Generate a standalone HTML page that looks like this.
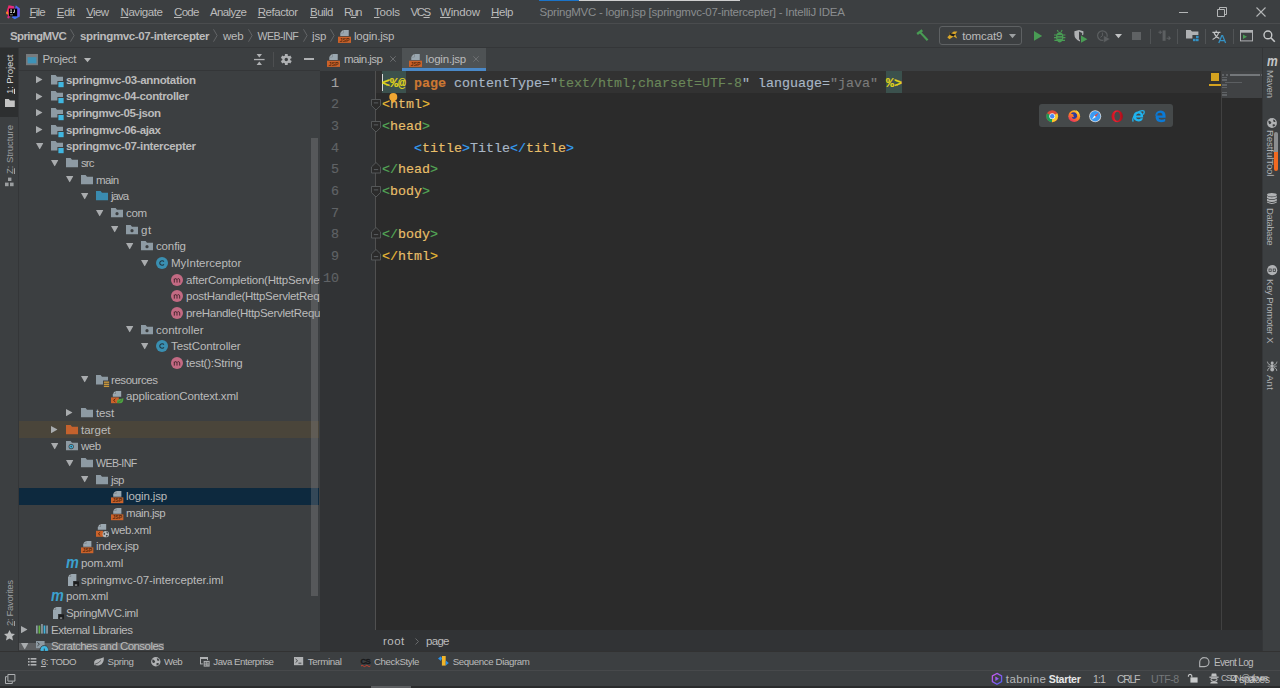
<!DOCTYPE html>
<html>
<head>
<meta charset="utf-8">
<title>SpringMVC - login.jsp</title>
<style>
*{box-sizing:border-box;margin:0;padding:0}
html,body{width:1280px;height:688px;overflow:hidden;background:#3c3f41}
body{position:relative;font-family:"Liberation Sans",sans-serif;font-size:11.5px;color:#bbbbbb}
.abs{position:absolute}
.t{position:absolute;white-space:nowrap;line-height:16px;height:16px}
.b{font-weight:bold}
svg{position:absolute;overflow:visible}
u{text-decoration:underline;text-underline-offset:1px}
#menubar{left:0;top:0;width:1280px;height:23px;background:#3c3f41}
#navbar{left:0;top:23px;width:1280px;height:24px;background:#3c3f41;border-top:1px solid #4a4c4e}
#leftstrip{left:0;top:47px;width:18px;height:604px;background:#3c3f41;border-top:1px solid #343638}
#rightstrip{left:1262px;top:47px;width:18px;height:604px;background:#3c3f41;border-top:1px solid #343638;border-left:1px solid #343638}
#project{left:18px;top:47px;width:302px;height:604px;background:#3c3f41;border-top:1px solid #343638;border-left:1px solid #343638;overflow:hidden}
#tabs{left:320px;top:47px;width:942px;height:24px;background:#3c3f41;border-top:1px solid #343638}
#editor{left:320px;top:71px;width:942px;height:559px;background:#2b2b2b;overflow:hidden}
#gutter{left:0;top:0;width:56px;height:559px;background:#313335;border-right:1px solid #505050}
#crumbs{left:320px;top:630px;width:942px;height:21px;background:#313335}
#bottomstrip{left:0;top:651px;width:1280px;height:19px;background:#3c3f41;border-top:1px solid #323232}
#statusbar{left:0;top:669.5px;width:1280px;height:18.5px;background:#3c3f41;border-top:1px solid #47494b}
.row{position:absolute;left:0;width:300.3px;height:16.667px}
.code{font-family:"Liberation Mono",monospace;font-size:13.333px;-webkit-text-stroke:0.15px;line-height:21.667px;height:21.667px;white-space:pre;position:absolute}
.ln{font-family:"Liberation Mono",monospace;font-size:13.333px;-webkit-text-stroke:0.15px;line-height:21.667px;height:21.667px;position:absolute;color:#606366}
.vt{position:absolute;white-space:nowrap;transform-origin:0 0;font-size:11px;line-height:14px;height:14px}
</style>
</head>
<body>

<svg width="0" height="0" style="position:absolute">
<defs>
<symbol id="i-folder" viewBox="0 0 12 9.6"><path d="M0 0H4.6L6 1.7H12V9.6H0z" fill="#8d9aa3"/></symbol>
<symbol id="i-folder-o" viewBox="0 0 12 9.6"><path d="M0 0H4.6L6 1.7H12V9.6H0z" fill="#c4622d"/></symbol>
<symbol id="i-folder-b" viewBox="0 0 12 9.6"><path d="M0 0H4.6L6 1.7H12V9.6H0z" fill="#3a8bb0"/></symbol>
<symbol id="i-module" viewBox="0 0 12.8 12.4"><path d="M0 0H4.6L6 1.7H12V6H6.4V9.6H0z" fill="#8d9aa3"/><rect x="7.4" y="7" width="5.4" height="5.4" fill="#40b6e0"/></symbol>
<symbol id="i-pkg" viewBox="0 0 12 9.6"><path d="M0 0H4.6L6 1.7H12V9.6H0z" fill="#8d9aa3"/><circle cx="6" cy="5.7" r="1.6" fill="#3c3f41"/></symbol>
<symbol id="i-webf" viewBox="0 0 12 9.6"><path d="M0 0H4.6L6 1.7H12V9.6H0z" fill="#8d9aa3"/><circle cx="5.2" cy="5.6" r="2.6" fill="#3c3f41"/><circle cx="5.2" cy="5.6" r="1.9" fill="#40b6e0"/><circle cx="5.2" cy="5.6" r="0.8" fill="#3c3f41"/></symbol>
<symbol id="i-res" viewBox="0 0 13.4 12.4"><path d="M0 0H4.6L6 1.7H12V5.6H7V9.6H0z" fill="#8d9aa3"/><rect x="7.9" y="6.5" width="5.4" height="1.4" fill="#c9973a"/><rect x="7.9" y="8.6" width="5.4" height="1.4" fill="#c9973a"/><rect x="7.9" y="10.7" width="5.4" height="1.4" fill="#c9973a"/></symbol>
<symbol id="i-class" viewBox="0 0 12 12"><circle cx="6" cy="6" r="6" fill="#3a8fb1"/><path d="M7.9 7.4A2.3 2.3 0 1 1 7.9 4.6" fill="none" stroke="#213640" stroke-width="1.1"/></symbol>
<symbol id="i-method" viewBox="0 0 12 12"><circle cx="6" cy="6" r="6" fill="#c36a83"/><path d="M3.3 8.6V4.6M3.3 5.6Q4 4.4 5 4.7T6 6V8.6M6 5.6Q6.7 4.4 7.7 4.7T8.7 6V8.6" fill="none" stroke="#4a2731" stroke-width="1"/></symbol>
<symbol id="i-page" viewBox="0 0 8.4 5.8"><path d="M3 0H8.4V5.8H0V3z" fill="#9aa7b0"/><path d="M2.4 0.3V2.5H0.2z" fill="#9aa7b0" opacity=".55"/></symbol>
<symbol id="i-jsp" viewBox="0 0 12.6 12.4"><path d="M5.3 0H10.4V5.8H2.2V3.1z" fill="#9aa7b0"/><path d="M4.7 0V2.5H2.2z" fill="#b9c3c9" opacity=".75"/><path d="M4.7 2.5H2.2V3.1H5.3V0H4.7z" fill="#3c3f41" opacity=".45"/><rect x="0" y="6.4" width="12.6" height="6" fill="#cb622a"/><text x="6.3" y="11.3" font-family="Liberation Sans" font-weight="bold" font-size="5.4" text-anchor="middle" fill="#5a2a0c" textLength="9.6" lengthAdjust="spacingAndGlyphs">JSP</text></symbol>
<symbol id="i-xmls" viewBox="0 0 12.6 12.4"><path d="M4.9 0H10.2V5.8H1.8V3.1z" fill="#9aa7b0"/><path d="M4.3 0V2.5H1.8z" fill="#b9c3c9" opacity=".75"/><path d="M4.3 2.5H1.8V3.1H4.9V0H4.3z" fill="#3c3f41" opacity=".45"/><rect x="0" y="6.4" width="7.8" height="6" fill="#cb622a"/><path d="M4.4 7.8L2.6 9.4L4.4 11" fill="none" stroke="#5a2a0c" stroke-width="1"/><path d="M6 11.8Q5.6 8.6 8.6 8Q10.8 7.8 12.6 7Q12.8 12 9 12.4Q7.2 12.6 6 11.8z" fill="#4fa043"/><path d="M6.6 11.6Q9 11 11 8.6" stroke="#2f6e2a" stroke-width="0.6" fill="none"/></symbol>
<symbol id="i-xmlw" viewBox="0 0 13 13.4"><path d="M4.9 0H10.2V5.8H1.8V3.1z" fill="#9aa7b0"/><path d="M4.3 0V2.5H1.8z" fill="#b9c3c9" opacity=".75"/><path d="M4.3 2.5H1.8V3.1H4.9V0H4.3z" fill="#3c3f41" opacity=".45"/><rect x="0" y="6.8" width="7" height="6" fill="#cb622a"/><path d="M4.2 8.2L2.4 9.8L4.2 11.4" fill="none" stroke="#5a2a0c" stroke-width="1"/><circle cx="9.8" cy="10.2" r="3.2" fill="#b4b8bb"/><path d="M7.6 8.6Q9 9 9.2 10Q8.8 11 7.8 11zM10.4 7.6Q11.8 8 12.2 9.2Q11.4 9.8 10.6 9zM10 11Q11.4 10.6 12 11.6Q11.2 12.8 10.2 12.8z" fill="#3c3f41"/></symbol>
<symbol id="i-iml" viewBox="0 0 11.2 12.6"><path d="M3.1 0H8.4V7H5V12H0V3.1z" fill="#9aa7b0"/><path d="M2.5 0V2.5H0z" fill="#b9c3c9" opacity=".75"/><path d="M2.5 2.5H0V3.1H3.1V0H2.5z" fill="#3c3f41" opacity=".45"/><rect x="5.8" y="7.4" width="5.4" height="5.2" fill="#1c1d1e"/><rect x="6.8" y="10.6" width="2.4" height="0.9" fill="#d6d9da"/></symbol>
<symbol id="i-lib" viewBox="0 0 12 9.8"><rect x="0" y="1.5" width="1.7" height="8.3" fill="#8d9aa3"/><rect x="2.55" y="1.5" width="1.7" height="8.3" fill="#62b543"/><rect x="5.1" y="0" width="1.7" height="9.8" fill="#8d9aa3"/><rect x="7.65" y="1.5" width="1.7" height="8.3" fill="#40b6e0"/><rect x="10.2" y="1.5" width="1.7" height="8.3" fill="#8d9aa3"/></symbol>
<symbol id="i-scr" viewBox="0 0 12.6 10.4"><rect x="0" y="0" width="8.6" height="7.2" fill="#8d9aa3"/><path d="M1.4 1.4L3.4 3.2L1.4 5" stroke="#3c3f41" stroke-width="0.9" fill="none"/><path d="M4.31 10.4A4.3 4.3 0 1 1 12.29 10.4z" fill="#40b6e0" stroke="#3c3f41" stroke-width="0.9"/><path d="M8.3 10.4V7.6" stroke="#3c3f41" stroke-width="1"/></symbol>
<symbol id="i-arrow-r" viewBox="0 0 6.6 7.2"><path d="M0 0L6.6 3.6L0 7.2z" fill="#a9acae"/></symbol>
<symbol id="i-arrow-d" viewBox="0 0 7.4 6.4"><path d="M0 0H7.4L3.7 6.4z" fill="#a9acae"/></symbol>
</defs>
</svg>

<div id="menubar" class="abs"><svg style="left:5.50px;top:4.50px" width="14.2" height="14.4" viewBox="0 0 14.2 14.4">
<defs><linearGradient id="lgA" x1="0" y1="0" x2="1" y2="1"><stop offset="0" stop-color="#fe2857"/><stop offset="1" stop-color="#c22fb5"/></linearGradient>
<linearGradient id="lgB" x1="0" y1="0" x2="0" y2="1"><stop offset="0" stop-color="#3b6ff5"/><stop offset=".5" stop-color="#7a48e8"/><stop offset="1" stop-color="#2f7cf6"/></linearGradient></defs>
<path d="M2.6 0.2L8 1.2L8.5 4L3 13.6L1.2 13L2.2 9.6L0.2 8.6L0.6 6.4z" fill="url(#lgA)"/>
<path d="M0 7.2L1.8 6.2L2.6 9.4L0.6 9.2z" fill="#fd8a1f"/>
<path d="M9.8 0.3L13.9 3.4L13.8 11.6L8.8 14.2L6 12.6L9 4z" fill="url(#lgB)"/>
<rect x="2.9" y="3.6" width="8.3" height="7.7" fill="#000"/>
<path d="M4.2 4.6h1.8v0.7h-0.5v2h0.5v0.7h-1.8v-0.7h0.5v-2h-0.5zM7.9 4.6h0.9v2.5q0 0.9-1 0.9q-0.7 0-1.1-0.5l0.5-0.5q0.2 0.3 0.5 0.3q0.2 0 0.2-0.3z" fill="#e8e8e8"/>
<rect x="4" y="9.6" width="3" height="0.6" fill="#d0d0d0"/></svg>
<span class="t" style="letter-spacing:-0.766px;left:29.5px;top:4.00px;color:#bbbbbb"><u>F</u>ile</span>
<span class="t" style="letter-spacing:-0.526px;left:56.75px;top:4.00px;color:#bbbbbb"><u>E</u>dit</span>
<span class="t" style="letter-spacing:-0.661px;left:86.25px;top:4.00px;color:#bbbbbb"><u>V</u>iew</span>
<span class="t" style="letter-spacing:-0.415px;left:120.5px;top:4.00px;color:#bbbbbb"><u>N</u>avigate</span>
<span class="t" style="letter-spacing:-0.667px;left:174px;top:4.00px;color:#bbbbbb"><u>C</u>ode</span>
<span class="t" style="letter-spacing:-0.656px;left:210px;top:4.00px;color:#bbbbbb">Analy<u>z</u>e</span>
<span class="t" style="letter-spacing:-0.462px;left:257.75px;top:4.00px;color:#bbbbbb"><u>R</u>efactor</span>
<span class="t" style="letter-spacing:-0.520px;left:310px;top:4.00px;color:#bbbbbb"><u>B</u>uild</span>
<span class="t" style="letter-spacing:-1.312px;left:344px;top:4.00px;color:#bbbbbb">R<u>u</u>n</span>
<span class="t" style="letter-spacing:-0.215px;left:374px;top:4.00px;color:#bbbbbb"><u>T</u>ools</span>
<span class="t" style="letter-spacing:-1.500px;left:410.5px;top:4.00px;color:#bbbbbb">VC<u>S</u></span>
<span class="t" style="letter-spacing:-0.184px;left:440px;top:4.00px;color:#bbbbbb"><u>W</u>indow</span>
<span class="t" style="letter-spacing:-0.391px;left:491px;top:4.00px;color:#bbbbbb"><u>H</u>elp</span>
<span class="t" style="letter-spacing:-0.244px;left:539.5px;top:4.00px;color:#8a8d8f">SpringMVC - login.jsp [springmvc-07-intercepter] - IntelliJ IDEA</span>
<div class="abs" style="left:539.4px;top:0;width:200.6px;height:1.2px;background:#cfcfcf"></div><div class="abs" style="left:539.4px;top:0;width:39.8px;height:1.2px;background:#1a73c8"></div>
<div class="abs" style="left:1178.5px;top:12px;width:9px;height:1px;background:#b4b6b7"></div>
<svg style="left:1217.00px;top:7.00px" width="10" height="10" viewBox="0 0 10 10"><path d="M0.5 2.5h7v7h-7zM2.5 2.5v-2h7v7h-2" fill="none" stroke="#b4b6b7" stroke-width="1"/></svg>
<svg style="left:1255.50px;top:7.00px" width="10" height="10" viewBox="0 0 10 10"><path d="M0.5 0.5l9 9M9.5 0.5l-9 9" fill="none" stroke="#b4b6b7" stroke-width="1.1"/></svg></div>
<div id="navbar" class="abs"><span class="t b" style="letter-spacing:-0.654px;left:10px;top:4.00px;">SpringMVC</span>
<svg style="left:70.30px;top:5.40px" width="4.6" height="13" viewBox="0 0 4.6 13"><path d="M0.5 0.3L4.1 6.5L0.5 12.7" fill="none" stroke="#65686a" stroke-width="0.9"/></svg>
<span class="t b" style="letter-spacing:-0.372px;left:80px;top:4.00px;">springmvc-07-intercepter</span>
<svg style="left:213.30px;top:5.40px" width="4.6" height="13" viewBox="0 0 4.6 13"><path d="M0.5 0.3L4.1 6.5L0.5 12.7" fill="none" stroke="#65686a" stroke-width="0.9"/></svg>
<span class="t" style="letter-spacing:-0.180px;left:223px;top:4.00px;">web</span>
<svg style="left:247.80px;top:5.40px" width="4.6" height="13" viewBox="0 0 4.6 13"><path d="M0.5 0.3L4.1 6.5L0.5 12.7" fill="none" stroke="#65686a" stroke-width="0.9"/></svg>
<span class="t" style="letter-spacing:-0.581px;left:257.5px;top:4.00px;font-size:10.6px">WEB-INF</span>
<svg style="left:302.80px;top:5.40px" width="4.6" height="13" viewBox="0 0 4.6 13"><path d="M0.5 0.3L4.1 6.5L0.5 12.7" fill="none" stroke="#65686a" stroke-width="0.9"/></svg>
<span class="t" style="letter-spacing:-0.102px;left:312px;top:4.00px;">jsp</span>
<svg style="left:329.80px;top:5.40px" width="4.6" height="13" viewBox="0 0 4.6 13"><path d="M0.5 0.3L4.1 6.5L0.5 12.7" fill="none" stroke="#65686a" stroke-width="0.9"/></svg>
<svg style="left:338.00px;top:5.50px" width="13" height="13" ><use href="#i-jsp"/></svg>
<span class="t" style="letter-spacing:-0.213px;left:354px;top:4.00px;">login.jsp</span>
<svg style="left:916.40px;top:5.40px" width="13" height="12.2" viewBox="0 0 14 13.6"><path d="M0.2 4.6L6 0.2L7.6 2.4L5.9 3.7L13.6 11.6L11.8 13.4L4.1 5.1L1.8 6.8z" fill="#499c54"/></svg>
<div class="abs" style="left:939px;top:2.1999999999999993px;width:83.2px;height:18.4px;border:1px solid #5e6163;border-radius:3px"></div>
<svg style="left:946.50px;top:7.00px" width="11" height="9" viewBox="0 0 11 9"><path d="M0.3 6.2L3 3.6L1.8 1.2L4.2 2.6L6.8 0.4L10.4 0.6L8.2 3.2L10.2 7.4L6.6 5.6L2.4 8.2z" fill="#d8a62a"/><path d="M1.8 1.2L4.4 2.4L7 3L8.2 3.2L6.6 5.6L3.6 4.6z" fill="#1d1d1b"/></svg>
<span class="t" style="letter-spacing:-0.137px;left:962.3px;top:3.70px;">tomcat9</span>
<svg style="left:1008.70px;top:10.00px" width="7" height="4.2" viewBox="0 0 7 4.2"><path d="M0 0H7L3.5 4.2z" fill="#9da0a2"/></svg>
<svg style="left:1033.60px;top:7.20px" width="8.2" height="9.8" viewBox="0 0 9 10.6"><path d="M0 0L9 5.3L0 10.6z" fill="#499c54"/></svg>
<svg style="left:1053.50px;top:5.60px" width="11.4" height="12.6" viewBox="0 0 11.4 12.6"><path d="M3.2 0.2L4.4 1.8M8.2 0.2L7 1.8" stroke="#499c54" stroke-width="1.1" fill="none"/>
<ellipse cx="5.7" cy="7.2" rx="3.7" ry="5.2" fill="#499c54"/>
<path d="M0 5h11.4M0 7.6h11.4M0.4 10.4h10.6" stroke="#499c54" stroke-width="1.2"/>
<path d="M3.4 5.6h4.6M3.4 8.2h4.6" stroke="#3c3f41" stroke-width="0.9"/></svg>
<svg style="left:1074.00px;top:5.60px" width="14" height="13" viewBox="0 0 14 13"><path d="M0.4 1.2L5 0L9.4 1.2V4.6L6 6.4V11.4Q0.4 9.4 0.4 4.6z" fill="#afb1b3"/>
<path d="M5 1.6V10Q8.4 8.2 8.2 3z" fill="#3c3f41"/>
<path d="M7 5.6L13.4 9.2L7 12.8z" fill="#499c54"/></svg>
<svg style="left:1097.00px;top:5.60px" width="13.4" height="13" viewBox="0 0 13.4 13"><circle cx="5.4" cy="5.6" r="4.8" fill="none" stroke="#5c5f61" stroke-width="1.2"/>
<path d="M5.4 2.6V5.8L3.4 7.4" fill="none" stroke="#5c5f61" stroke-width="1"/>
<path d="M6.6 5.4L13.2 9L6.6 12.8z" fill="#5c5f61" stroke="#3c3f41" stroke-width="0.6"/></svg>
<svg style="left:1115.00px;top:10.20px" width="7" height="4.2" viewBox="0 0 7 4.2"><path d="M0 0H7L3.5 4.2z" fill="#c0c2c3"/></svg>
<div class="abs" style="left:1132.2px;top:7.800000000000001px;width:8.6px;height:8.6px;background:#5f6264"></div>
<div class="abs" style="left:1150px;top:4.5px;width:1px;height:15px;background:#515456"></div>
<svg style="left:1157.50px;top:6.00px" width="12.5" height="11" viewBox="0 0 12.5 11"><path d="M2.2 0.4V4M0.4 2.2H4" stroke="#5c5f61" stroke-width="1.1"/><rect x="4.6" y="0.4" width="3" height="10.4" fill="#5c5f61"/><path d="M8.6 8.2H12M10.6 6.4L12.2 8.2L10.6 10" stroke="#5c5f61" stroke-width="1.1" fill="none"/></svg>
<div class="abs" style="left:1177px;top:4.5px;width:1px;height:15px;background:#515456"></div>
<svg style="left:1185.50px;top:6.40px" width="13" height="11.4" viewBox="0 0 13 11.4"><path d="M0 0H4.6L6 1.6H12.4V5H6.4V8.6H0z" fill="#afb1b3"/>
<rect x="10" y="5.8" width="2.6" height="2.4" fill="#3592c4"/><rect x="7" y="8.8" width="2.6" height="2.4" fill="#3592c4"/><rect x="10" y="8.8" width="2.6" height="2.4" fill="#3592c4"/></svg>
<div class="abs" style="left:1205px;top:4.5px;width:1px;height:15px;background:#515456"></div>
<svg style="left:1212.00px;top:5.60px" width="14" height="13.4" viewBox="0 0 14 13.4"><path d="M0.4 2.4H8.4M4.2 0.4V2.4M6.6 2.6Q5.4 7 0.6 9.4M2 2.8Q3.6 7 7.4 8.6" fill="none" stroke="#c3c5c6" stroke-width="1.1"/>
<path d="M6.8 13L9.8 5.6H10.6L13.6 13M7.8 10.6H12.6" fill="none" stroke="#3592c4" stroke-width="1.3"/></svg>
<div class="abs" style="left:1233px;top:4.5px;width:1px;height:15px;background:#515456"></div>
<svg style="left:1240.00px;top:6.40px" width="13" height="11.4" viewBox="0 0 13 11.4"><rect x="0.5" y="0.5" width="12" height="10.4" fill="none" stroke="#afb1b3" stroke-width="1"/><rect x="0.5" y="0.5" width="12" height="2.2" fill="#afb1b3"/>
<path d="M3 4.6L7 6.8L3 9z" fill="#499c54"/></svg>
<svg style="left:1262.60px;top:6.20px" width="12.4" height="12.4" viewBox="0 0 12.4 12.4"><circle cx="4.9" cy="4.9" r="3.9" fill="none" stroke="#c6c8c9" stroke-width="1.4"/><path d="M7.8 7.8L11.8 11.8" stroke="#c6c8c9" stroke-width="1.6"/></svg></div>
<div id="leftstrip" class="abs"><div class="abs" style="left:0;top:0px;width:18px;height:68.5px;background:#2d2f30"></div>
<span class="vt" style="letter-spacing:-0.116px;left:3.00px;top:45.50px;transform:rotate(-90deg);font-size:9.6px;color:#d4d4d4;"><u>1</u>: Project</span>
<svg style="left:4.80px;top:50.80px" width="9.8" height="8" viewBox="0 0 9.8 8"><path d="M0 0H3.8L5 1.4H9.8V8H0z" fill="#c4c4c4"/></svg>
<span class="vt" style="letter-spacing:-0.104px;left:3.00px;top:126.40px;transform:rotate(-90deg);font-size:9.6px;color:#9b9ea0;"><u>Z</u>: Structure</span>
<svg style="left:5.00px;top:128.60px" width="9" height="10" viewBox="0 0 9 10"><rect x="3" y="0.6" width="3.4" height="3.4" fill="#9b9ea0"/><rect x="0" y="5.6" width="3.6" height="3.6" fill="#9b9ea0"/><rect x="5" y="5.6" width="3.6" height="3.6" fill="#9b9ea0"/></svg>
<span class="vt" style="letter-spacing:-0.376px;left:3.00px;top:578.40px;transform:rotate(-90deg);font-size:9.6px;color:#9b9ea0;"><u>2</u>: Favorites</span>
<svg style="left:4.00px;top:582.20px" width="11" height="10.4" viewBox="0 0 11 10.4"><path d="M5.5 0L7.2 3.6L11 4L8.2 6.6L9 10.4L5.5 8.4L2 10.4L2.8 6.6L0 4L3.8 3.6z" fill="#b9bbbc"/></svg></div>
<div id="project" class="abs">
<div class="abs" style="left:0px;top:595px;width:145px;height:6.5px;background:#6b6d6f;opacity:.7"></div>
<svg style="left:16.70px;top:27.93px" width="6.6" height="7.2" ><use href="#i-arrow-r"/></svg>
<svg style="left:31.60px;top:26.73px" width="12.8" height="12.4" ><use href="#i-module"/></svg>
<span class="t b" style="letter-spacing:-0.336px;left:47px;top:23.53px;">springmvc-03-annotation</span>
<svg style="left:16.70px;top:44.60px" width="6.6" height="7.2" ><use href="#i-arrow-r"/></svg>
<svg style="left:31.60px;top:43.40px" width="12.8" height="12.4" ><use href="#i-module"/></svg>
<span class="t b" style="letter-spacing:-0.393px;left:47px;top:40.20px;">springmvc-04-controller</span>
<svg style="left:16.70px;top:61.27px" width="6.6" height="7.2" ><use href="#i-arrow-r"/></svg>
<svg style="left:31.60px;top:60.07px" width="12.8" height="12.4" ><use href="#i-module"/></svg>
<span class="t b" style="letter-spacing:-0.453px;left:47px;top:56.87px;">springmvc-05-json</span>
<svg style="left:16.70px;top:77.93px" width="6.6" height="7.2" ><use href="#i-arrow-r"/></svg>
<svg style="left:31.60px;top:76.73px" width="12.8" height="12.4" ><use href="#i-module"/></svg>
<span class="t b" style="letter-spacing:-0.375px;left:47px;top:73.53px;">springmvc-06-ajax</span>
<svg style="left:16.50px;top:94.90px" width="7.4" height="6.4" ><use href="#i-arrow-d"/></svg>
<svg style="left:31.60px;top:93.40px" width="12.8" height="12.4" ><use href="#i-module"/></svg>
<span class="t b" style="letter-spacing:-0.350px;left:47px;top:90.20px;">springmvc-07-intercepter</span>
<svg style="left:31.50px;top:111.57px" width="7.4" height="6.4" ><use href="#i-arrow-d"/></svg>
<svg style="left:46.80px;top:110.07px" width="12" height="9.6" ><use href="#i-folder"/></svg>
<span class="t" style="letter-spacing:-0.922px;left:62px;top:106.87px;">src</span>
<svg style="left:46.50px;top:128.24px" width="7.4" height="6.4" ><use href="#i-arrow-d"/></svg>
<svg style="left:61.80px;top:126.74px" width="12" height="9.6" ><use href="#i-folder"/></svg>
<span class="t" style="letter-spacing:-0.579px;left:77px;top:123.54px;">main</span>
<svg style="left:61.50px;top:144.90px" width="7.4" height="6.4" ><use href="#i-arrow-d"/></svg>
<svg style="left:76.80px;top:143.40px" width="12" height="9.6" ><use href="#i-folder-b"/></svg>
<span class="t" style="letter-spacing:-1.003px;left:92px;top:140.20px;">java</span>
<svg style="left:76.50px;top:161.57px" width="7.4" height="6.4" ><use href="#i-arrow-d"/></svg>
<svg style="left:91.80px;top:160.07px" width="12" height="9.6" ><use href="#i-pkg"/></svg>
<span class="t" style="letter-spacing:-0.317px;left:107px;top:156.87px;">com</span>
<svg style="left:91.50px;top:178.24px" width="7.4" height="6.4" ><use href="#i-arrow-d"/></svg>
<svg style="left:106.80px;top:176.74px" width="12" height="9.6" ><use href="#i-pkg"/></svg>
<span class="t" style="letter-spacing:0.606px;left:122px;top:173.54px;">gt</span>
<svg style="left:106.50px;top:194.90px" width="7.4" height="6.4" ><use href="#i-arrow-d"/></svg>
<svg style="left:121.80px;top:193.40px" width="12" height="9.6" ><use href="#i-pkg"/></svg>
<span class="t" style="letter-spacing:-0.138px;left:137px;top:190.20px;">config</span>
<svg style="left:121.50px;top:211.57px" width="7.4" height="6.4" ><use href="#i-arrow-d"/></svg>
<svg style="left:137.00px;top:208.87px" width="12" height="12" ><use href="#i-class"/></svg>
<span class="t" style="letter-spacing:-0.001px;left:152px;top:206.87px;">MyInterceptor</span>
<svg style="left:152.00px;top:225.54px" width="12" height="12" ><use href="#i-method"/></svg>
<span class="t" style="letter-spacing:-0.204px;left:167px;top:223.54px;">afterCompletion(HttpServlet</span>
<svg style="left:152.00px;top:242.20px" width="12" height="12" ><use href="#i-method"/></svg>
<span class="t" style="letter-spacing:-0.267px;left:167px;top:240.20px;">postHandle(HttpServletReq</span>
<svg style="left:152.00px;top:258.87px" width="12" height="12" ><use href="#i-method"/></svg>
<span class="t" style="letter-spacing:-0.287px;left:167px;top:256.87px;">preHandle(HttpServletRequ</span>
<svg style="left:106.50px;top:278.24px" width="7.4" height="6.4" ><use href="#i-arrow-d"/></svg>
<svg style="left:121.80px;top:276.74px" width="12" height="9.6" ><use href="#i-pkg"/></svg>
<span class="t" style="letter-spacing:0.021px;left:137px;top:273.54px;">controller</span>
<svg style="left:121.50px;top:294.91px" width="7.4" height="6.4" ><use href="#i-arrow-d"/></svg>
<svg style="left:137.00px;top:292.21px" width="12" height="12" ><use href="#i-class"/></svg>
<span class="t" style="letter-spacing:-0.096px;left:152px;top:290.21px;">TestController</span>
<svg style="left:152.00px;top:308.87px" width="12" height="12" ><use href="#i-method"/></svg>
<span class="t" style="letter-spacing:-0.228px;left:167px;top:306.87px;">test():String</span>
<svg style="left:61.50px;top:328.24px" width="7.4" height="6.4" ><use href="#i-arrow-d"/></svg>
<svg style="left:76.80px;top:326.74px" width="13.4" height="12.4" ><use href="#i-res"/></svg>
<span class="t" style="letter-spacing:-0.450px;left:92px;top:323.54px;">resources</span>
<svg style="left:91.80px;top:342.91px" width="12.6" height="12.4" ><use href="#i-xmls"/></svg>
<span class="t" style="letter-spacing:-0.157px;left:107px;top:340.21px;">applicationContext.xml</span>
<svg style="left:46.70px;top:361.27px" width="6.6" height="7.2" ><use href="#i-arrow-r"/></svg>
<svg style="left:61.80px;top:360.07px" width="12" height="9.6" ><use href="#i-folder"/></svg>
<span class="t" style="letter-spacing:-0.116px;left:77px;top:356.87px;">test</span>
<div class="row" style="top:373.21px;background:#4a453a"></div>
<svg style="left:31.70px;top:377.94px" width="6.6" height="7.2" ><use href="#i-arrow-r"/></svg>
<svg style="left:46.80px;top:376.74px" width="12" height="9.6" ><use href="#i-folder-o"/></svg>
<span class="t" style="letter-spacing:0.016px;left:62px;top:373.54px;">target</span>
<svg style="left:31.50px;top:394.91px" width="7.4" height="6.4" ><use href="#i-arrow-d"/></svg>
<svg style="left:46.80px;top:393.41px" width="12" height="9.6" ><use href="#i-webf"/></svg>
<span class="t" style="letter-spacing:-0.455px;left:62px;top:390.21px;">web</span>
<svg style="left:46.50px;top:411.57px" width="7.4" height="6.4" ><use href="#i-arrow-d"/></svg>
<svg style="left:61.80px;top:410.07px" width="12" height="9.6" ><use href="#i-folder"/></svg>
<span class="t" style="letter-spacing:-0.589px;left:77px;top:406.87px;font-size:10.6px">WEB-INF</span>
<svg style="left:61.50px;top:428.24px" width="7.4" height="6.4" ><use href="#i-arrow-d"/></svg>
<svg style="left:76.80px;top:426.74px" width="12" height="9.6" ><use href="#i-folder"/></svg>
<span class="t" style="letter-spacing:-0.652px;left:92px;top:423.54px;">jsp</span>
<div class="row" style="top:439.88px;background:#0d293e"></div>
<svg style="left:91.80px;top:442.91px" width="12.6" height="12.4" ><use href="#i-jsp"/></svg>
<span class="t" style="letter-spacing:-0.125px;left:107px;top:440.21px;">login.jsp</span>
<svg style="left:91.80px;top:459.58px" width="12.6" height="12.4" ><use href="#i-jsp"/></svg>
<span class="t" style="letter-spacing:-0.447px;left:107px;top:456.88px;">main.jsp</span>
<svg style="left:77.00px;top:476.24px" width="13" height="13.4" ><use href="#i-xmlw"/></svg>
<span class="t" style="letter-spacing:-0.331px;left:92px;top:473.54px;">web.xml</span>
<svg style="left:61.80px;top:492.91px" width="12.6" height="12.4" ><use href="#i-jsp"/></svg>
<span class="t" style="letter-spacing:-0.299px;left:77px;top:490.21px;">index.jsp</span>
<span class="t b" style="left:46.60px;top:505.68px;font-style:italic;font-size:16px;line-height:18px;height:18px;color:#3ba1cf;transform:scaleX(0.9);transform-origin:0 0">m</span>
<span class="t" style="letter-spacing:-0.192px;left:62px;top:506.88px;">pom.xml</span>
<svg style="left:48.80px;top:526.14px" width="11.2" height="12.6" ><use href="#i-iml"/></svg>
<span class="t" style="letter-spacing:-0.079px;left:62px;top:523.54px;">springmvc-07-intercepter.iml</span>
<span class="t b" style="left:31.60px;top:539.01px;font-style:italic;font-size:16px;line-height:18px;height:18px;color:#3ba1cf;transform:scaleX(0.9);transform-origin:0 0">m</span>
<span class="t" style="letter-spacing:-0.176px;left:47px;top:540.21px;">pom.xml</span>
<svg style="left:33.80px;top:559.48px" width="11.2" height="12.6" ><use href="#i-iml"/></svg>
<span class="t" style="letter-spacing:-0.357px;left:47px;top:556.88px;">SpringMVC.iml</span>
<svg style="left:1.70px;top:577.94px" width="6.6" height="7.2" ><use href="#i-arrow-r"/></svg>
<svg style="left:17.10px;top:576.34px" width="12" height="9.8" ><use href="#i-lib"/></svg>
<span class="t" style="letter-spacing:-0.440px;left:32px;top:573.54px;">External Libraries</span>
<svg style="left:1.50px;top:594.91px" width="7.4" height="6.4" ><use href="#i-arrow-d"/></svg>
<svg style="left:17.10px;top:592.81px" width="12.6" height="10.4" ><use href="#i-scr"/></svg>
<span class="t" style="letter-spacing:-0.555px;left:32px;top:590.21px;">Scratches and Consoles</span>
<div class="abs" style="left:0;top:22px;width:301px;height:1px;background:#343638"></div>
<svg style="left:7.00px;top:6.20px" width="12" height="11.2" viewBox="0 0 12 11.2"><rect x="0" y="0" width="12" height="11.2" fill="#777b7e"/><rect x="1.6" y="3.2" width="8.8" height="6.2" fill="#3d93b8"/></svg>
<span class="t" style="letter-spacing:-0.283px;left:23.4px;top:3.00px;">Project</span>
<svg style="left:64.90px;top:10.00px" width="7" height="4.3" viewBox="0 0 7 4.3"><path d="M0 0H7L3.5 4.3z" fill="#b4b6b7"/></svg>
<svg style="left:235.00px;top:5.80px" width="10.6" height="11" viewBox="0 0 10.6 11"><path d="M2.6 0H8L5.3 3.4zM2.6 11H8L5.3 7.6z" fill="#afb1b3"/><rect x="0" y="4.9" width="10.6" height="1.3" fill="#afb1b3"/></svg>
<div class="abs" style="left:253.5px;top:3.6000000000000014px;width:1px;height:15px;background:#4d4f51"></div>
<svg style="left:262.40px;top:5.80px" width="10.6" height="11" viewBox="-5.3 -5.5 10.6 11"><g fill="#afb1b3"><circle r="3.9"/>
<g id="gt"><rect x="-1.4" y="-5.5" width="2.8" height="11"/></g><use href="#gt" transform="rotate(60)"/><use href="#gt" transform="rotate(120)"/></g><circle r="1.7" fill="#3c3f41"/></svg>
<div class="abs" style="left:284.5px;top:10.399999999999999px;width:10.5px;height:1.5px;background:#afb1b3"></div>
<div class="abs" style="left:291.8px;top:89.6px;width:7.4px;height:458.4px;background:#9a9c9e;opacity:.28"></div>
</div>
<div id="tabs" class="abs"><svg style="left:7.10px;top:5.90px" width="13" height="13" ><use href="#i-jsp"/></svg>
<span class="t" style="letter-spacing:-0.561px;left:24px;top:3.30px;">main.jsp</span>
<svg style="left:69.70px;top:8.30px" width="6" height="6" viewBox="0 0 6 6"><path d="M0.3 0.3L5.7 5.7M5.7 0.3L0.3 5.7" stroke="#6f7274" stroke-width="0.9" fill="none"/></svg>
<div class="abs" style="left:81.5px;top:0px;width:84.8px;height:23px;background:#4e5254"></div>
<div class="abs" style="left:81.5px;top:20px;width:84.8px;height:3px;background:#4a88c7"></div>
<svg style="left:89.00px;top:5.90px" width="13" height="13" ><use href="#i-jsp"/></svg>
<span class="t" style="letter-spacing:-0.194px;left:105.60000000000002px;top:3.30px;">login.jsp</span>
<svg style="left:153.20px;top:8.30px" width="6" height="6" viewBox="0 0 6 6"><path d="M0.3 0.3L5.7 5.7M5.7 0.3L0.3 5.7" stroke="#6f7274" stroke-width="0.9" fill="none"/></svg></div>
<div id="editor" class="abs">
  <div id="gutter" class="abs"></div>
<div class="abs" style="left:56px;top:0;width:886px;height:21.667px;background:#323232"></div>
<div class="abs" style="left:62px;top:0;width:24px;height:21.667px;background:#3b514d"></div>
<div class="abs" style="left:566px;top:0;width:16px;height:21.667px;background:#3b514d"></div>
<div class="abs" style="left:61.80000000000001px;top:2.6px;width:1.4px;height:17.4px;background:#d8d8d8"></div>
<span class="ln" style="left:3px;width:16px;text-align:right;top:1.50px;color:#a4a3a3">1</span>
<span class="ln" style="left:3px;width:16px;text-align:right;top:23.17px;color:#606366">2</span>
<span class="ln" style="left:3px;width:16px;text-align:right;top:44.83px;color:#606366">3</span>
<span class="ln" style="left:3px;width:16px;text-align:right;top:66.50px;color:#606366">4</span>
<span class="ln" style="left:3px;width:16px;text-align:right;top:88.17px;color:#606366">5</span>
<span class="ln" style="left:3px;width:16px;text-align:right;top:109.84px;color:#606366">6</span>
<span class="ln" style="left:3px;width:16px;text-align:right;top:131.50px;color:#606366">7</span>
<span class="ln" style="left:3px;width:16px;text-align:right;top:153.17px;color:#606366">8</span>
<span class="ln" style="left:3px;width:16px;text-align:right;top:174.84px;color:#606366">9</span>
<span class="ln" style="left:3px;width:16px;text-align:right;top:196.50px;color:#606366">10</span>
<div class="code" style="left:62px;top:1.50px"><span style="color:#e2d51a;font-weight:bold">&lt;%@</span> <span style="color:#cc7832;font-weight:bold">page</span> <span style="color:#a9b7c6">contentType=&quot;</span><span style="color:#6a8759">text/html;charset=UTF-8</span><span style="color:#a9b7c6">&quot; language=</span><span style="color:#7b7b7b">&quot;java&quot;</span> <span style="color:#e2d51a;font-weight:bold">%&gt;</span></div>
<div class="code" style="left:62px;top:23.17px"><span style="color:#e8ba36">&lt;</span><span style="color:#e8bf6a">html</span><span style="color:#e8ba36">&gt;</span></div>
<div class="code" style="left:62px;top:44.83px"><span style="color:#54a857">&lt;</span><span style="color:#e8bf6a">head</span><span style="color:#54a857">&gt;</span></div>
<div class="code" style="left:62px;top:66.50px">    <span style="color:#359ff4">&lt;</span><span style="color:#e8bf6a">title</span><span style="color:#359ff4">&gt;</span><span style="color:#a9b7c6">Title</span><span style="color:#359ff4">&lt;/</span><span style="color:#e8bf6a">title</span><span style="color:#359ff4">&gt;</span></div>
<div class="code" style="left:62px;top:88.17px"><span style="color:#54a857">&lt;/</span><span style="color:#e8bf6a">head</span><span style="color:#54a857">&gt;</span></div>
<div class="code" style="left:62px;top:109.84px"><span style="color:#54a857">&lt;</span><span style="color:#e8bf6a">body</span><span style="color:#54a857">&gt;</span></div>
<div class="code" style="left:62px;top:153.17px"><span style="color:#54a857">&lt;/</span><span style="color:#e8bf6a">body</span><span style="color:#54a857">&gt;</span></div>
<div class="code" style="left:62px;top:174.84px"><span style="color:#e8ba36">&lt;/</span><span style="color:#e8bf6a">html</span><span style="color:#e8ba36">&gt;</span></div>
<svg style="left:50.50px;top:28.00px" width="10" height="11.5" viewBox="0 0 10 11.5"><path d="M0.5 0.5H9.5V6.6L5 11L0.5 6.6z" fill="#2b2b2b" stroke="#595c5e" stroke-width="0.9"/><path d="M2.8 3.9H7.2" stroke="#606366" stroke-width="0.9"/></svg>
<svg style="left:50.50px;top:49.67px" width="10" height="11.5" viewBox="0 0 10 11.5"><path d="M0.5 0.5H9.5V6.6L5 11L0.5 6.6z" fill="#2b2b2b" stroke="#595c5e" stroke-width="0.9"/><path d="M2.8 3.9H7.2" stroke="#606366" stroke-width="0.9"/></svg>
<svg style="left:50.50px;top:91.30px" width="10" height="11.5" viewBox="0 0 10 11.5"><path d="M0.5 11H9.5V4.9L5 0.5L0.5 4.9z" fill="#2b2b2b" stroke="#595c5e" stroke-width="0.9"/><path d="M2.8 7.6H7.2" stroke="#606366" stroke-width="0.9"/></svg>
<svg style="left:50.50px;top:114.67px" width="10" height="11.5" viewBox="0 0 10 11.5"><path d="M0.5 0.5H9.5V6.6L5 11L0.5 6.6z" fill="#2b2b2b" stroke="#595c5e" stroke-width="0.9"/><path d="M2.8 3.9H7.2" stroke="#606366" stroke-width="0.9"/></svg>
<svg style="left:50.50px;top:156.30px" width="10" height="11.5" viewBox="0 0 10 11.5"><path d="M0.5 11H9.5V4.9L5 0.5L0.5 4.9z" fill="#2b2b2b" stroke="#595c5e" stroke-width="0.9"/><path d="M2.8 7.6H7.2" stroke="#606366" stroke-width="0.9"/></svg>
<svg style="left:50.50px;top:177.97px" width="10" height="11.5" viewBox="0 0 10 11.5"><path d="M0.5 11H9.5V4.9L5 0.5L0.5 4.9z" fill="#2b2b2b" stroke="#595c5e" stroke-width="0.9"/><path d="M2.8 7.6H7.2" stroke="#606366" stroke-width="0.9"/></svg>
<svg style="left:69.00px;top:22.40px" width="8.6" height="9" viewBox="0 0 8.6 9"><circle cx="4.3" cy="4" r="4" fill="#f0a732"/><rect x="2.6" y="6.4" width="3.4" height="2.6" fill="#f0a732"/></svg>
<div class="abs" style="left:719px;top:33px;width:134px;height:23.4px;background:#45494a;border-radius:3px"></div>
<svg style="left:725.70px;top:39.00px" width="12.4" height="12.4" viewBox="-6.2 -6.2 12.4 12.4"><circle r="6" fill="#dc4a38"/><path d="M0 0L-5.2 -3A6 6 0 0 0 -0.2 6z" fill="#1b9b57"/><path d="M0 0L-0.2 6A6 6 0 0 0 5.2 -3z" fill="#f8cb2c"/><circle r="2.9" fill="#f1f1f1"/><circle r="2.2" fill="#4a8af4"/></svg>
<svg style="left:747.50px;top:39.00px" width="12.4" height="12.4" viewBox="-6.2 -6.2 12.4 12.4"><defs><linearGradient id="ffg" x1="0.8" y1="0" x2="0.2" y2="1"><stop offset="0" stop-color="#ffd43a"/><stop offset=".45" stop-color="#ff8a1e"/><stop offset="1" stop-color="#e3246a"/></linearGradient></defs>
<circle r="5.9" fill="url(#ffg)"/><path d="M1.6 -6.4Q4.6 -4.6 4.8 -1.4L3 -3.4Q2.6 -5 1.6 -6.4z" fill="#ffe14a"/>
<path d="M-3.4 -2.6Q-1.6 -4.6 1 -3.8Q3.4 -2.6 3 0.4Q2.4 2.8 -0.2 2.8Q-2.4 2.4 -2.4 0.6Q-1 1.4 0 0.6Q-1.6 -0.6 -0.6 -1.8Q-2.2 -2 -3.4 -2.6z" fill="#2b3a9e"/></svg>
<svg style="left:769.00px;top:39.00px" width="12.4" height="12.4" viewBox="-6.2 -6.2 12.4 12.4"><circle r="6" fill="#d4d7db"/><circle r="5.2" fill="#3b99f1"/><path d="M3.4 -3.4L0.7 0.7L-0.7 -0.7z" fill="#f4453b"/><path d="M-3.4 3.4L0.7 0.7L-0.7 -0.7z" fill="#f4f4f4"/></svg>
<svg style="left:790.80px;top:39.00px" width="12.4" height="12.4" viewBox="-6.2 -6.2 12.4 12.4"><defs><linearGradient id="opg" x1="0" y1="0" x2="1" y2="0"><stop offset="0" stop-color="#c4101e"/><stop offset=".35" stop-color="#f01f30"/><stop offset="1" stop-color="#a30d18"/></linearGradient></defs><ellipse rx="5.7" ry="6" fill="url(#opg)"/><ellipse rx="2.8" ry="4.5" fill="#45494a"/></svg>
<svg style="left:812.30px;top:39.00px" width="12.4" height="12.4" viewBox="-6.2 -6.2 12.4 12.4"><path d="M5 1.2H-2.2Q-1.8 3 0.4 3Q1.8 3 2.6 2H4.8Q3.6 5.2 0.4 5.2Q-4.6 5.2 -4.8 0.4Q-4.6 -4.6 0.4 -4.6Q5.2 -4.4 5 1.2zM-2.2 -0.8H2.6Q2.4 -2.6 0.4 -2.6Q-1.8 -2.6 -2.2 -0.8z" fill="#1fb4f0"/><path d="M-5 5.4Q-6.8 2.4 -2 -2.6Q2.8 -6.8 5.8 -5.2Q6.6 -4 5.2 -1.6" fill="none" stroke="#1fb4f0" stroke-width="1.3"/></svg>
<svg style="left:834.10px;top:39.00px" width="12.4" height="12.4" viewBox="-6.2 -6.2 12.4 12.4"><path d="M-5.2 0.6Q-4.6 -5.6 0.6 -5.6Q5.4 -5.4 5.4 0.2V1.6H-1.8Q-1.4 3.6 1.4 3.6Q3.4 3.6 5 2.6V5Q3.2 6 0.8 6Q-4.4 5.8 -4.6 1Q-4.4 -1.6 -2 -2.8Q-2.8 -2 -3 -0.8H2.4Q2.4 -3.2 0.2 -3.4Q-3 -3.4 -5.2 0.6z" fill="#0b7ad6"/></svg>
<div class="abs" style="left:890.9000000000001px;top:1.7999999999999972px;width:8.3px;height:8.1px;background:#d4a21f"></div>
<div class="abs" style="left:889.2px;top:13.099999999999994px;width:11.8px;height:1.9px;background:#d4a21f"></div>
<div class="abs" style="left:900.5999999999999px;top:0;width:1px;height:559px;background:#414141"></div>
<div class="abs" style="left:901.5999999999999px;top:0;width:40.4px;height:27px;background:#404244"></div>
<div class="abs" style="left:902px;top:3.15px;width:1.7px;height:1.7px;background:#5f6265"></div>
<div class="abs" style="left:905.5px;top:3.15px;width:2.9px;height:1.7px;background:#5f6265"></div>
<div class="abs" style="left:909.7px;top:3.15px;width:30.5px;height:1.7px;background:#74777a"></div>
<div class="abs" style="left:941px;top:3.15px;width:1.0px;height:1.7px;background:#5f6265"></div>
<div class="abs" style="left:902px;top:5.75px;width:4.6px;height:1.7px;background:#5f6265"></div>
<div class="abs" style="left:902px;top:7.95px;width:4.6px;height:1.7px;background:#5f6265"></div>
<div class="abs" style="left:905.3px;top:10.95px;width:16.6px;height:1.1px;background:#5c5f62"></div>
<div class="abs" style="left:902px;top:13.05px;width:5.0px;height:1.7px;background:#5f6265"></div>
<div class="abs" style="left:902px;top:15.55px;width:4.6px;height:1.7px;background:#5f6265"></div>
<div class="abs" style="left:902px;top:20.55px;width:5.0px;height:1.7px;background:#5f6265"></div>
<div class="abs" style="left:902px;top:22.95px;width:5.0px;height:1.7px;background:#5f6265"></div>
</div>
<div id="crumbs" class="abs"><span class="t" style="letter-spacing:0.491px;left:63px;top:3.30px;">root</span>
<svg style="left:94.50px;top:8.40px" width="4" height="7" viewBox="0 0 4 7"><path d="M0.5 0.5L3.5 3.5L0.5 6.5" fill="none" stroke="#6e7173" stroke-width="0.9"/></svg>
<span class="t" style="letter-spacing:-0.698px;left:106px;top:3.30px;">page</span></div>
<div id="rightstrip" class="abs"><span class="t b" style="left:3.599999999999909px;top:4.899999999999999px;font-style:italic;font-size:14.4px;color:#c4c6c7;transform:scaleX(0.84);transform-origin:0 0">m</span>
<span class="vt" style="letter-spacing:-0.199px;left:14.10px;top:22.40px;transform:rotate(90deg);font-size:9.6px;color:#b0b2b4;">Maven</span>
<svg style="left:4.20px;top:69.60px" width="10" height="10" viewBox="-5 -5 10 10"><circle r="4.9" fill="#b0b2b4"/><path d="M-3.4 -2.6Q-1.4 -2 -0.6 -0.4Q-1 1.2 -2.6 1.2Q-4 0 -3.4 -2.6zM1 -3.6Q3 -3.4 3.6 -1.6Q2.4 -0.6 1.4 -1.6zM0.6 1.4Q2.4 0.8 3.4 2Q2.4 3.8 0.8 3.6z" fill="#3c3f41"/></svg>
<span class="vt" style="letter-spacing:-0.097px;left:14.10px;top:82.20px;transform:rotate(90deg);font-size:9.6px;color:#b0b2b4;">RestfulTool</span>
<div class="abs" style="left:11.400000000000091px;top:84px;width:4px;height:38.6px;border-radius:2px;background:linear-gradient(#8b8d8f 0,#8b8d8f 51%,#f26a21 51%,#f26a21 100%)"></div>
<svg style="left:4.40px;top:145.00px" width="9.8" height="11" viewBox="0 0 9.8 11"><g fill="#b0b2b4"><ellipse cx="4.9" cy="1.8" rx="4.9" ry="1.8"/><path d="M0 3Q4.9 5.6 9.8 3V5Q4.9 7.6 0 5zM0 5.8Q4.9 8.4 9.8 5.8V7.8Q4.9 10.4 0 7.8zM0 8.6Q4.9 11.2 9.8 8.6V9.4Q4.9 12.4 0 9.4z"/></g></svg>
<span class="vt" style="letter-spacing:-0.497px;left:14.10px;top:159.80px;transform:rotate(90deg);font-size:9.6px;color:#b0b2b4;">Database</span>
<svg style="left:4.00px;top:216.60px" width="10.4" height="10.4" viewBox="-5.2 -5.2 10.4 10.4"><circle r="5.1" fill="#b0b2b4"/><rect x="-3.6" y="-1.6" width="3" height="3.2" fill="#3c3f41"/><rect x="0.6" y="-1.6" width="3" height="3.2" fill="#3c3f41"/><rect x="-2.8" y="-0.8" width="1.4" height="1.6" fill="#b0b2b4"/><rect x="1.4" y="-0.8" width="1.4" height="1.6" fill="#b0b2b4"/></svg>
<span class="vt" style="letter-spacing:-0.263px;left:14.10px;top:230.70px;transform:rotate(90deg);font-size:9.6px;color:#b0b2b4;">Key Promoter X</span>
<svg style="left:4.00px;top:313.00px" width="10.4" height="10.6" viewBox="0 0 10.4 10.6"><g fill="#b0b2b4"><circle cx="5.2" cy="2" r="1.5"/><ellipse cx="5.2" cy="5" rx="1.5" ry="1.7"/><ellipse cx="5.2" cy="8.4" rx="1.9" ry="2.1"/></g><path d="M3.8 4.4L1 2.6L0.4 0.6M6.6 4.4L9.4 2.6L10 0.6M3.8 5.2H0.6M6.6 5.2H9.8M3.8 6L1 8L0.6 10M6.6 6L9.4 8L9.8 10" stroke="#b0b2b4" stroke-width="0.8" fill="none"/></svg>
<span class="vt" style="letter-spacing:0.197px;left:14.10px;top:327.40px;transform:rotate(90deg);font-size:9.6px;color:#b0b2b4;">Ant</span></div>
<div id="bottomstrip" class="abs"><svg style="left:28.40px;top:5.60px" width="8.4" height="7.6" viewBox="0 0 8.4 7.6"><g fill="#afb1b3"><rect x="0" y="0" width="1.6" height="1.6"/><rect x="0" y="3" width="1.6" height="1.6"/><rect x="0" y="6" width="1.6" height="1.6"/><rect x="2.6" y="0" width="5.8" height="1.6"/><rect x="2.6" y="3" width="5.8" height="1.6"/><rect x="2.6" y="6" width="5.8" height="1.6"/></g></svg>
<span class="t" style="letter-spacing:-0.454px;left:40.9px;top:1.70px;font-size:9.7px;"><u>6</u>: TODO</span>
<svg style="left:94.00px;top:5.00px" width="10" height="9" viewBox="0 0 10 9"><path d="M9.8 0.2Q10.4 6.6 5.4 8.2Q2.4 9 0.6 7.6L0 8.4L0.2 6.4Q-0.4 3.4 2.8 2.2Q6.6 1.6 9.8 0.2z" fill="#afb1b3"/><path d="M1 7.2Q4.4 6.4 7 3.4" stroke="#3c3f41" stroke-width="0.7" fill="none"/></svg>
<span class="t" style="letter-spacing:-0.343px;left:107.6px;top:1.70px;font-size:9.7px;">Spring</span>
<svg style="left:150.50px;top:4.80px" width="9.6" height="9.6" viewBox="-4.8 -4.8 9.6 9.6"><circle r="4.7" fill="#afb1b3"/><path d="M-3.4 -2.6Q-1.4 -2 -0.6 -0.4Q-1 1.2 -2.6 1.2Q-4 0 -3.4 -2.6zM1 -3.6Q3 -3.4 3.6 -1.6Q2.4 -0.6 1.4 -1.6zM0.6 1.4Q2.4 0.8 3.4 2Q2.4 3.8 0.8 3.6z" fill="#3c3f41"/></svg>
<span class="t" style="letter-spacing:-0.525px;left:164px;top:1.70px;font-size:9.7px;">Web</span>
<svg style="left:200.20px;top:4.60px" width="10" height="10" viewBox="0 0 10 10"><rect x="0" y="0" width="8" height="7.4" fill="#afb1b3"/><rect x="1" y="2" width="6" height="4.4" fill="#3c3f41"/><rect x="3.2" y="3.6" width="6.8" height="6.4" fill="#afb1b3" stroke="#3c3f41" stroke-width="0.8"/><path d="M4.6 5.4H6.4M4.6 6.8H6.4M4.6 8.2H6.4M7.2 5.4H8.8M8 5.4V8.6" stroke="#3c3f41" stroke-width="0.7"/></svg>
<span class="t" style="letter-spacing:-0.479px;left:213.3px;top:1.70px;font-size:9.7px;">Java Enterprise</span>
<svg style="left:294.20px;top:5.20px" width="9.2" height="8.2" viewBox="0 0 9.2 8.2"><rect width="9.2" height="8.2" fill="#afb1b3"/><path d="M1.6 2L3.6 3.8L1.6 5.6M4.4 6.2H7.4" stroke="#3c3f41" stroke-width="0.9" fill="none"/></svg>
<span class="t" style="letter-spacing:-0.358px;left:307.8px;top:1.70px;font-size:9.7px;">Terminal</span>
<span class="t b" style="left:360.4px;top:4.600000000000023px;font-size:7.8px;line-height:9px;height:9px;color:#17181a;letter-spacing:-0.5px;-webkit-text-stroke:0.3px #17181a">CS</span>
<svg style="left:360.60px;top:13.00px" width="9.4" height="2" viewBox="0 0 9.4 2"><path d="M0 1Q1.2 -0.2 2.35 1T4.7 1T7.05 1T9.4 1" stroke="#d5402b" stroke-width="0.9" fill="none"/></svg>
<span class="t" style="letter-spacing:-0.400px;left:374px;top:1.70px;font-size:9.7px;">CheckStyle</span>
<svg style="left:438.40px;top:4.40px" width="10.8" height="9.6" viewBox="0 0 10.8 9.6"><rect x="3.9" y="0" width="3.8" height="9.6" fill="#f0b429"/><path d="M0 2.6L3 0.2V1.6H3.9V3.6H3V5z" fill="#2b90e8"/><path d="M10.8 7L7.8 4.6V6H7.7V8H7.8V9.4z" fill="#2b90e8"/></svg>
<span class="t" style="letter-spacing:-0.396px;left:452.8px;top:1.70px;font-size:9.7px;">Sequence Diagram</span>
<svg style="left:1199.10px;top:4.90px" width="10.6" height="10.4" viewBox="0 0 10.6 10.4"><path d="M5.5 0.6A4.5 4.5 0 1 1 5.5 9.6H0.7V5.1A4.5 4.5 0 0 1 5.5 0.6z" fill="none" stroke="#afb1b3" stroke-width="1.15"/></svg>
<span class="t" style="letter-spacing:-0.656px;left:1213.9px;top:2.50px;font-size:10px;">Event Log</span></div>
<div id="statusbar" class="abs"><svg style="left:5.00px;top:3.10px" width="10.4" height="10" viewBox="0 0 10.4 10"><path d="M2.9 0.5H9.9V7.1H2.9z" fill="none" stroke="#afb1b3" stroke-width="1"/><path d="M2.5 2.7H0.5V9.5H7.3V7.5" fill="none" stroke="#afb1b3" stroke-width="1"/></svg>
<svg style="left:991.70px;top:2.30px" width="10" height="11.6" viewBox="0 0 10 11.6"><defs><linearGradient id="tn" x1="0" y1="0" x2="1" y2="1"><stop offset="0" stop-color="#d35bf0"/><stop offset="1" stop-color="#4a5cf0"/></linearGradient></defs><path d="M5 0.4L9.6 3V8.6L5 11.2L0.4 8.6V3z" fill="none" stroke="url(#tn)" stroke-width="1.3"/><path d="M3.4 3.6L7 5.8L3.4 8z" fill="url(#tn)"/></svg>
<span class="t" style="letter-spacing:0.411px;left:1005.8px;top:0.20px;color:#b4b6b8;font-size:11.5px">tabnine</span>
<span class="t b" style="letter-spacing:-0.343px;left:1048.7px;top:0.20px;color:#e6e6e6;font-size:10.6px">Starter</span>
<span class="t" style="letter-spacing:-0.917px;left:1093px;top:0.20px;font-size:10.6px">1:1</span>
<span class="t" style="letter-spacing:-1.424px;left:1117.1px;top:0.20px;font-size:10.6px">CRLF</span>
<span class="t" style="letter-spacing:-0.479px;left:1151.1px;top:0.20px;color:#75787a;font-size:10.6px">UTF-8</span>
<svg style="left:1188.00px;top:2.90px" width="9.6" height="9.6" viewBox="0 0 9.6 9.6"><rect x="2.4" y="4.4" width="7.2" height="5.2" fill="#c8cacb"/><path d="M3.8 4.4V2.6A1.8 1.8 0 0 0 0.4 2.6V3.8" fill="none" stroke="#c8cacb" stroke-width="1.1"/></svg>
<svg style="left:1209.20px;top:2.70px" width="10" height="10.6" viewBox="0 0 10 10.6"><path d="M2.2 3.6L2.8 0.6H7.2L7.8 3.6z" fill="#bfc1c2"/><rect x="0.4" y="3.6" width="9.2" height="1.2" fill="#bfc1c2"/><path d="M2 5.6H8V7.4Q5 9.6 2 7.4z" fill="none" stroke="#bfc1c2" stroke-width="0.9"/><path d="M1.2 10.6Q1.4 8.6 3.2 8.6H6.8Q8.6 8.6 8.8 10.6z" fill="#bfc1c2"/></svg>
<span class="t" style="letter-spacing:-0.558px;left:1231.5px;top:0.20px;font-size:10.6px">4 spaces</span>
<span class="t" style="letter-spacing:-1.309px;left:1221px;top:-0.40px;font-size:8.6px;color:#d8d8d8;opacity:.8">CSDN @gtloves</span>
<div class="abs" style="left:0;top:15.899999999999977px;width:1280px;height:2px;background:#2a2b2c"></div>
<div class="abs" style="left:370.8px;top:15.899999999999977px;width:40.6px;height:2px;background:#5c5e60"></div></div>
</body>
</html>
